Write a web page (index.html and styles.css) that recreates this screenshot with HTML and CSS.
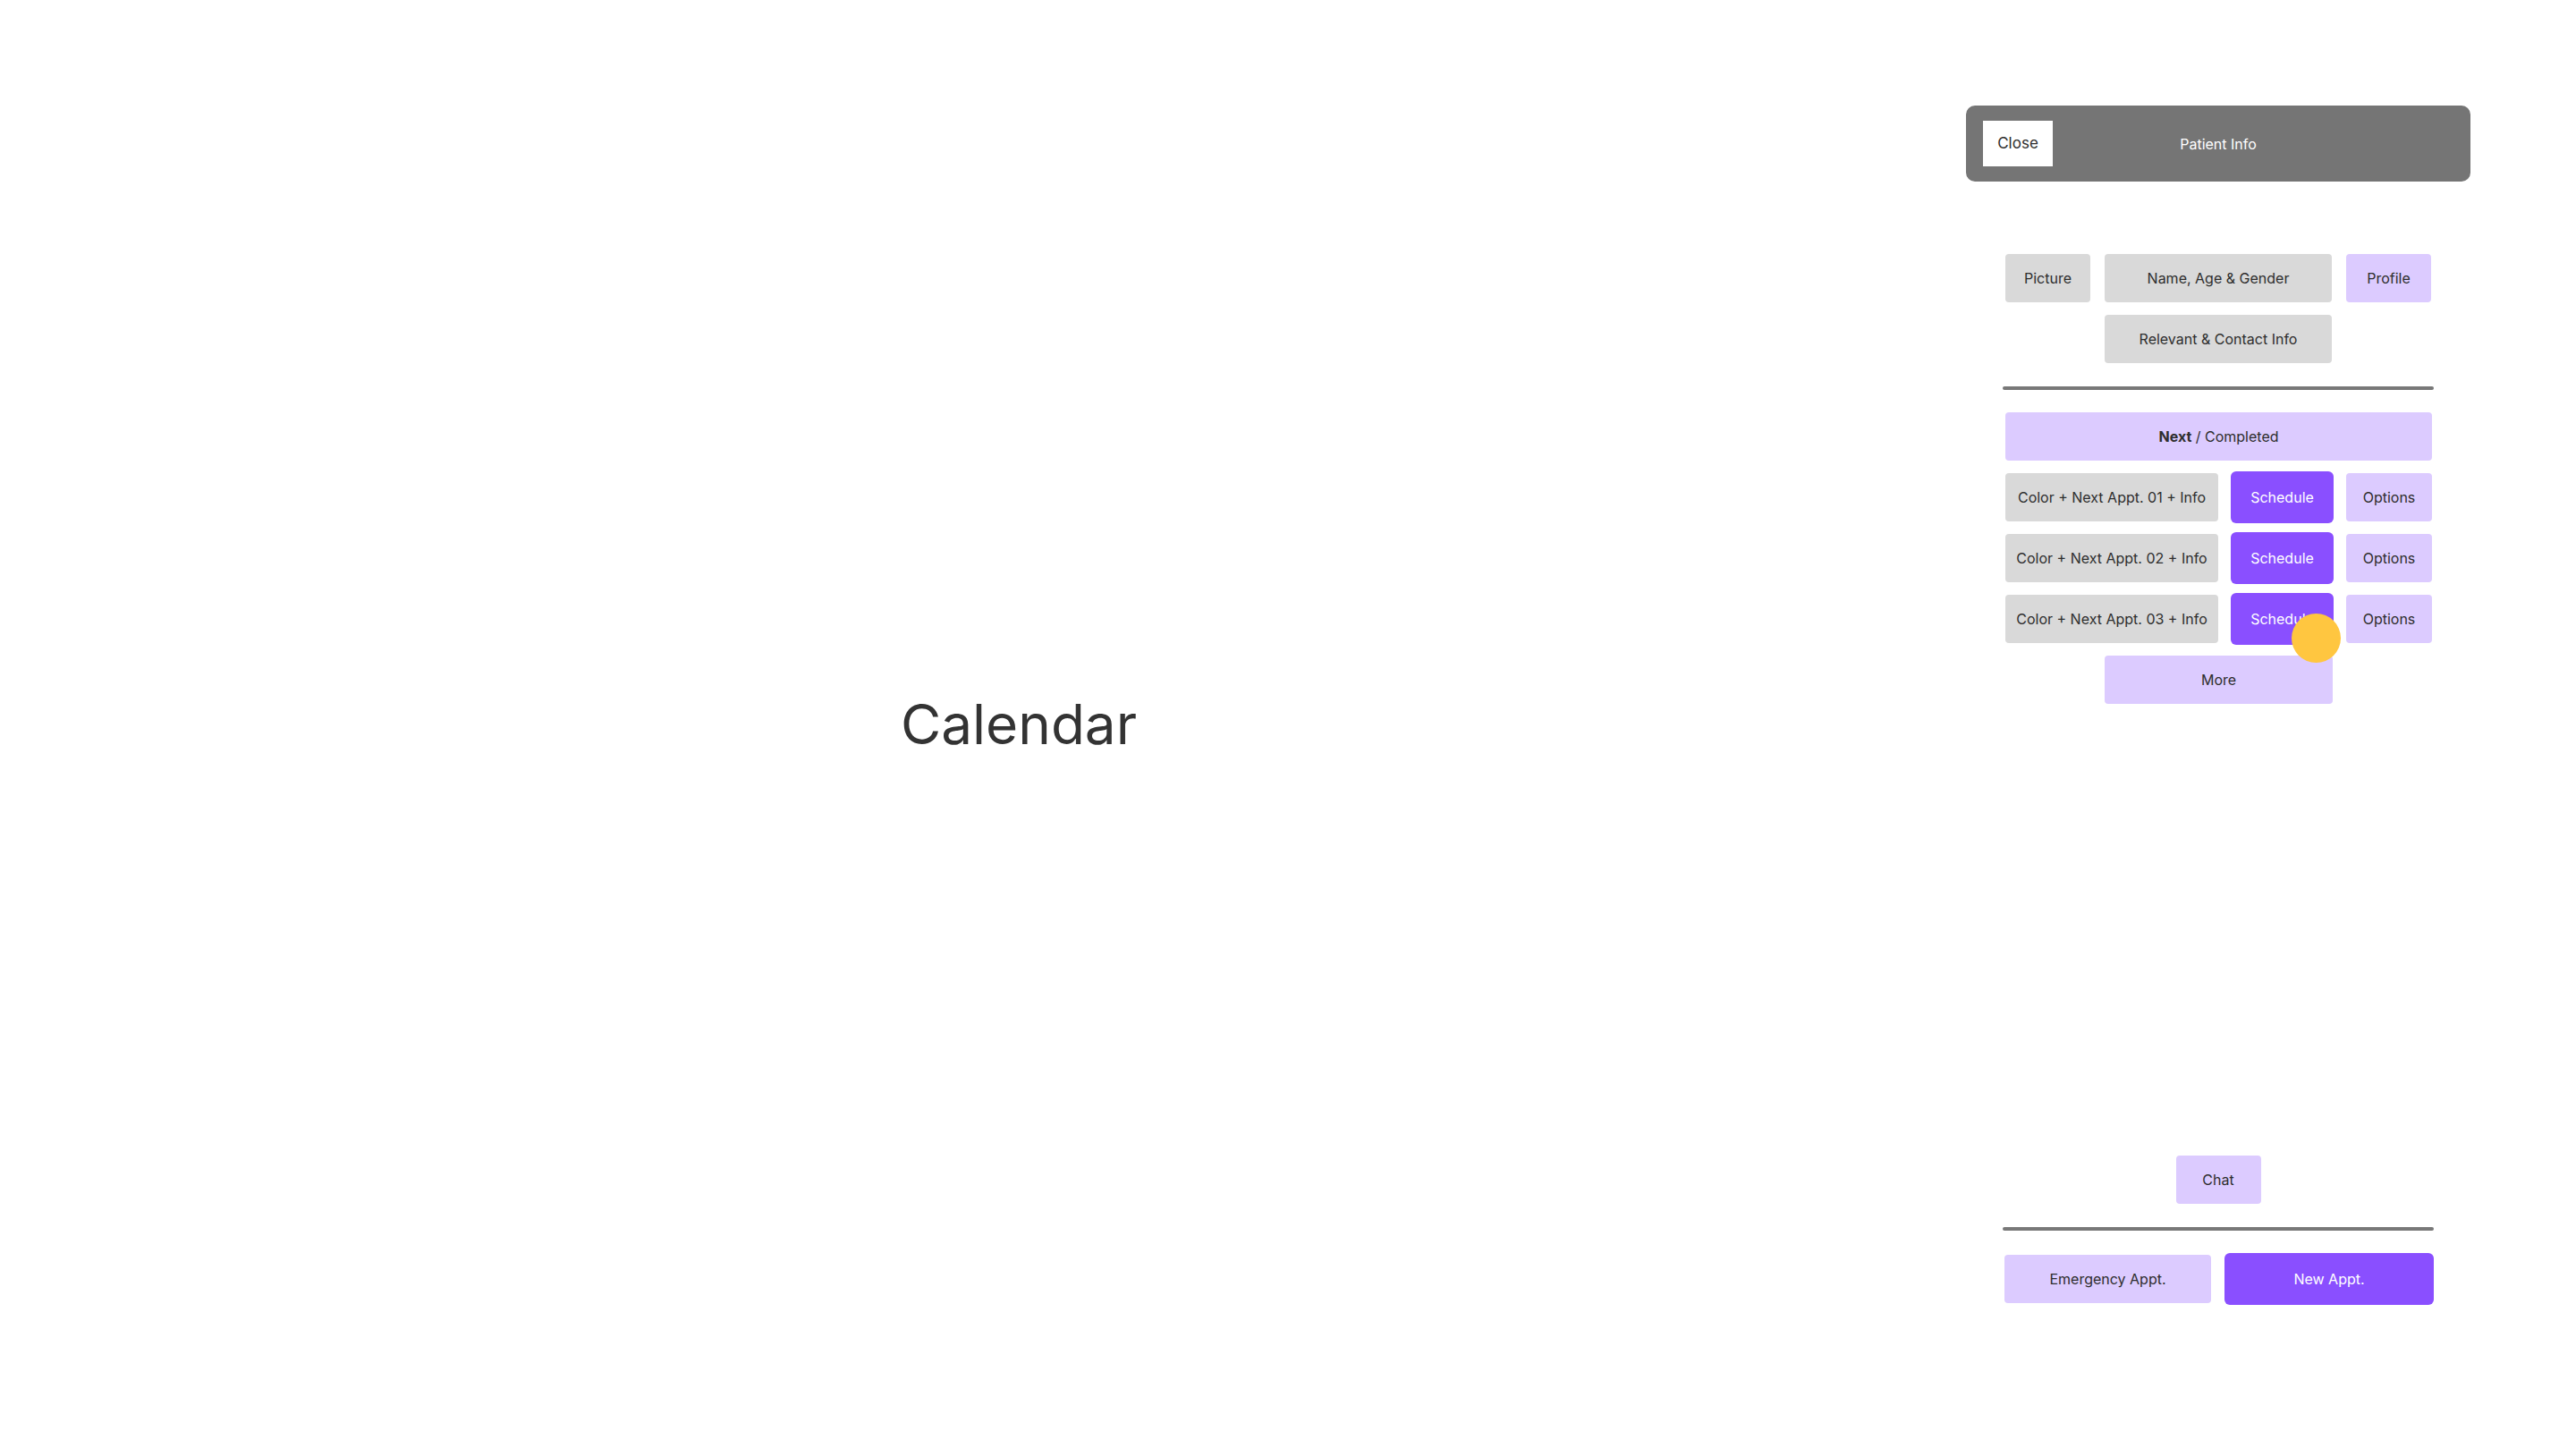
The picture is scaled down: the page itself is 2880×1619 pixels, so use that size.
FILE: index.html
```html
<html>
<head>
    <title>Calendar - Patient Info</title>
    <link rel="stylesheet" href="styles.css">
</head>

<body>
    <div class="page">
        <main class="calendar">
            <h1 class="calendar-title">Calendar</h1>
        </main>

        <aside class="panel">
            <header class="panel-header">
                <div class="btn-close">Close</div>
                <div class="panel-title">Patient Info</div>
            </header>

            <section class="patient">
                <div class="box gray">Picture</div>
                <div class="box gray">Name, Age &amp; Gender</div>
                <div class="box light">Profile</div>
                <div class="box gray relevant">Relevant &amp; Contact Info</div>
            </section>

            <div class="divider"></div>

            <section class="appts">
                <div class="box light appts-head"><b>Next</b>&nbsp;/ Completed</div>

                <div class="box gray">Color + Next Appt. 01 + Info</div>
                <div class="box dark schedule">Schedule</div>
                <div class="box light">Options</div>

                <div class="box gray">Color + Next Appt. 02 + Info</div>
                <div class="box dark schedule">Schedule</div>
                <div class="box light">Options</div>

                <div class="box gray">Color + Next Appt. 03 + Info</div>
                <div class="box dark schedule">Schedule<span class="cursor"></span></div>
                <div class="box light">Options</div>
            </section>

            <div class="more-row">
                <div class="box light more">More</div>
            </div>

            <div class="panel-bottom">
                <div class="chat-row">
                    <div class="box light chat">Chat</div>
                </div>

                <div class="divider"></div>

                <div class="actions">
                    <div class="box light">Emergency Appt.</div>
                    <div class="box dark new-appt">New Appt.</div>
                </div>
            </div>
        </aside>
    </div>
</body>

</html>
```

FILE: styles.css
```css
* {
    box-sizing: border-box;
}

body {
    margin: 0;
    background-color: #FFFFFF;
    font-family: Inter, "Noto Sans", sans-serif;
    color: #2E2E2E;
}

.page {
    display: flex;
    height: 100vh;
    padding: 118px 118px 160px 0;
}

/* left side */

.calendar {
    flex: 1;
    display: flex;
    align-items: center;
    justify-content: center;
    padding: 0 0 0 80px;
    margin-top: -118px;
    margin-bottom: -160px;
}

.calendar-title {
    margin: 0;
    font-size: 62px;
    font-weight: 400;
    color: #333333;
}

/* right side */

.panel {
    width: 564px;
    display: flex;
    flex-direction: column;
}

.panel-header {
    display: grid;
    grid-template-columns: 1fr auto 1fr;
    align-items: center;
    height: 85px;
    padding: 0 19px;
    background-color: #757575;
    border-radius: 10px;
}

.btn-close {
    justify-self: start;
    width: 78px;
    height: 51px;
    line-height: 51px;
    text-align: center;
    background-color: #FFFFFF;
    font-size: 17px;
    color: #2E2E2E;
}

.panel-title {
    color: #FFFFFF;
    font-size: 16px;
}

.box {
    height: 54px;
    display: flex;
    align-items: center;
    justify-content: center;
    border-radius: 4px;
    font-size: 16px;
    white-space: nowrap;
}

.gray {
    background-color: #D9D9D9;
}

.light {
    background-color: #DCCBFF;
}

.dark {
    background-color: #8A4FFF;
    color: #FFFFFF;
    border-radius: 6px;
}

.patient {
    display: grid;
    grid-template-columns: 95px 254px 95px;
    column-gap: 16px;
    row-gap: 14px;
    margin: 81px 43px 0 44px;
}

.patient .relevant {
    grid-column: 2;
}

.divider {
    height: 4px;
    margin: 26px 41px 25px 41px;
    background-color: #787878;
    border-radius: 2px;
}

.appts {
    display: grid;
    grid-template-columns: 238px 115px 96px;
    column-gap: 14px;
    row-gap: 14px;
    margin: 0 43px 0 44px;
}

.appts-head {
    grid-column: 1 / 4;
}

.schedule {
    position: relative;
    height: 58px;
    margin: -2px 0;
}

.cursor {
    position: absolute;
    left: 68px;
    top: 23px;
    width: 55px;
    height: 55px;
    border-radius: 50%;
    background-color: #FFC640;
}

.more-row {
    display: flex;
    justify-content: center;
    margin: 14px 0 0 1px;
}

.more {
    width: 255px;
}

.panel-bottom {
    margin-top: auto;
}

.chat-row {
    display: flex;
    justify-content: center;
}

.chat {
    width: 95px;
}

.actions {
    display: grid;
    grid-template-columns: 231px 232px;
    column-gap: 15px;
    align-items: center;
    margin: 0 43px 0 43px;
}

.new-appt {
    height: 58px;
    margin-right: -2px;
}
```
